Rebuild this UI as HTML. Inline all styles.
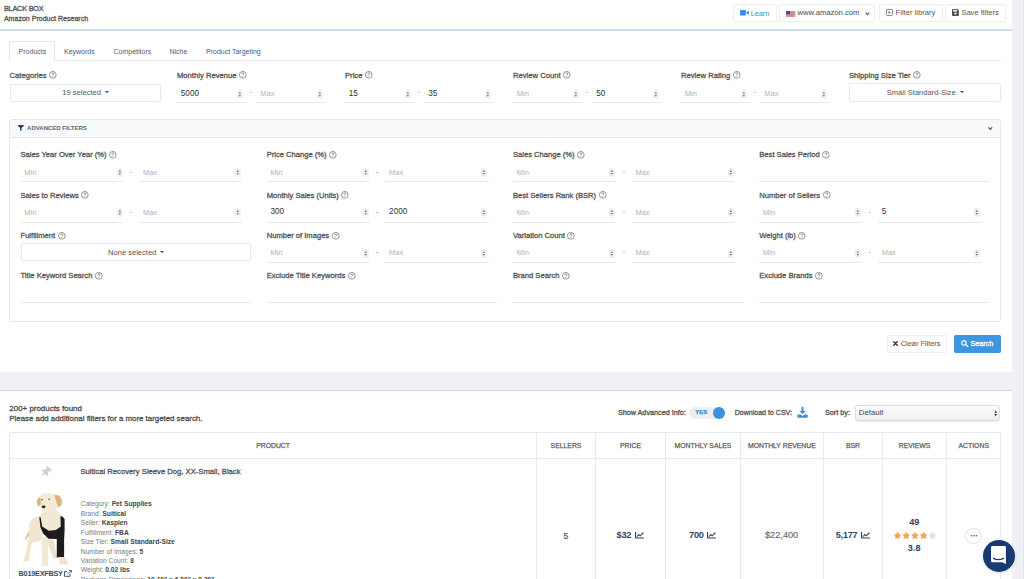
<!DOCTYPE html><html><head><meta charset="utf-8"><style>
html,body{margin:0;padding:0;}
body{width:1024px;height:579px;overflow:hidden;position:relative;background:#fff;font-family:"Liberation Sans",sans-serif;}
.t{position:absolute;white-space:nowrap;line-height:1;}
.b{position:absolute;box-sizing:border-box;}
svg.b{overflow:visible;}
#root{position:absolute;left:0;top:0;width:1024px;height:579px;overflow:hidden;}
</style></head><body><div id="root">
<div class="b" style="left:1011.80px;top:0.00px;width:12.20px;height:579.00px;background:#f0f1f5"></div>
<div class="b" style="left:1022.60px;top:0.00px;width:1.40px;height:579.00px;background:#dce8f8"></div>
<div class="t" id="hdr1" style="left:3.90px;top:4.72px;font-size:7.3px;font-weight:normal;color:#555;letter-spacing:-0.2px;-webkit-text-stroke:0.3px #555;">BLACK BOX</div>
<div class="t" id="hdr2" style="left:3.90px;top:15.43px;font-size:7.05px;font-weight:normal;color:#555;-webkit-text-stroke:0.3px #555;">Amazon Product Research</div>
<div class="b" style="left:0.00px;top:29.00px;width:1011.80px;height:1.50px;background:#d2ddec"></div>
<div class="b" style="left:732.90px;top:4.30px;width:44.20px;height:18.10px;border:1px solid #eceef1;border-radius:2px;background:#fff"></div>
<svg class="b" style="left:739.7px;top:10.3px" width="8.8" height="5.4" viewBox="0 0 9 5.5"><rect x="0" y="0" width="6" height="5.5" rx="0.7" fill="#3a8ee8"/><path d="M6.2 2.75 L9 0.5 V5Z" fill="#3a8ee8"/></svg>
<div class="t" id="learn" style="left:750.70px;top:9.62px;font-size:7.3px;font-weight:normal;color:#3a8ee8;">Learn</div>
<div class="b" style="left:779.20px;top:4.30px;width:95.40px;height:18.10px;border:1px solid #eceef1;border-radius:2px;background:#fff"></div>
<svg class="b" style="left:785.7px;top:11.0px" width="9.2" height="6.0" viewBox="0 0 19 12"><rect width="19" height="12" fill="#c0394a"/><rect y="0.92" width="19" height="0.92" fill="#f4f4f4"/><rect y="2.76" width="19" height="0.92" fill="#f4f4f4"/><rect y="4.60" width="19" height="0.92" fill="#f4f4f4"/><rect y="6.44" width="19" height="0.92" fill="#f4f4f4"/><rect y="8.28" width="19" height="0.92" fill="#f4f4f4"/><rect y="10.12" width="19" height="0.92" fill="#f4f4f4"/><rect width="8.5" height="6.5" fill="#40508a"/></svg>
<div class="t" id="amz" style="left:797.40px;top:9.32px;font-size:7.65px;font-weight:normal;color:#4a4a4a;">www.amazon.com</div>
<svg class="b" style="left:865px;top:11.6px" width="5" height="3.4" viewBox="0 0 5 3.4"><path d="M0.6 0.6 L2.5 2.6 L4.4 0.6" fill="none" stroke="#666" stroke-width="1.3"/></svg>
<div class="b" style="left:879.30px;top:4.30px;width:63.30px;height:18.10px;border:1px solid #eceef1;border-radius:2px;background:#fff"></div>
<svg class="b" style="left:885.6px;top:9.3px" width="6.9" height="6.9" viewBox="0 0 7 7"><rect x="0.45" y="0.45" width="6.1" height="6.1" rx="0.7" fill="none" stroke="#666" stroke-width="0.8"/><path d="M2.6 2 L4.9 3.5 L2.6 5Z" fill="#666"/></svg>
<div class="t" id="flib" style="left:895.60px;top:9.37px;font-size:7.6px;font-weight:normal;color:#555;">Filter library</div>
<div class="b" style="left:945.20px;top:4.30px;width:60.40px;height:18.10px;border:1px solid #eceef1;border-radius:2px;background:#fff"></div>
<svg class="b" style="left:952px;top:9.2px" width="6.9" height="6.9" viewBox="0 0 7 7"><path d="M0 0.7 Q0 0 0.7 0 H5.4 L7 1.6 V6.3 Q7 7 6.3 7 H0.7 Q0 7 0 6.3Z" fill="#555"/><rect x="1.3" y="0.9" width="3.6" height="1.7" fill="#fff"/><circle cx="3.5" cy="4.6" r="1.05" fill="#fff"/></svg>
<div class="t" id="save" style="left:961.40px;top:9.41px;font-size:7.55px;font-weight:normal;color:#555;">Save filters</div>
<div class="b" style="left:9.50px;top:59.90px;width:991.30px;height:1.00px;background:#e4e7eb"></div>
<div class="b" style="left:9.10px;top:41.10px;width:45.60px;height:19.80px;border:1px solid #e4e7eb;border-bottom:none;border-radius:2px 2px 0 0;background:#fff"></div>
<div class="t" id="tab1" style="left:18.60px;top:47.87px;font-size:7.0px;font-weight:normal;color:#5a5a5a;">Products</div>
<div class="t" id="tab2" style="left:64.00px;top:47.87px;font-size:7.0px;font-weight:normal;color:#4d5a70;">Keywords</div>
<div class="t" style="left:113.50px;top:47.87px;font-size:7.0px;font-weight:normal;color:#4d5a70;">Competitors</div>
<div class="t" style="left:169.50px;top:47.87px;font-size:7.0px;font-weight:normal;color:#4d5a70;">Niche</div>
<div class="t" style="left:206.00px;top:47.87px;font-size:7.0px;font-weight:normal;color:#4d5a70;">Product Targeting</div>
<div class="t" id="lab0" style="left:9.60px;top:71.82px;font-size:7.65px;font-weight:normal;color:#555;-webkit-text-stroke:0.3px #555;">Categories</div>
<svg class="b" style="left:48.99px;top:71.10px" width="7.6" height="7.6" viewBox="0 0 8 8"><circle cx="4" cy="4" r="3.55" fill="none" stroke="#747474" stroke-width="0.8"/><path d="M2.95 3.1 Q2.95 2 4 2 Q5.05 2 5.05 3 Q5.05 3.55 4.45 3.95 Q4 4.3 4 4.9" fill="none" stroke="#747474" stroke-width="0.8"/><circle cx="4" cy="5.95" r="0.48" fill="#747474"/></svg>
<div class="t" id="lab1" style="left:177.00px;top:71.82px;font-size:7.65px;font-weight:normal;color:#555;-webkit-text-stroke:0.3px #555;">Monthly Revenue</div>
<svg class="b" style="left:238.93px;top:71.10px" width="7.6" height="7.6" viewBox="0 0 8 8"><circle cx="4" cy="4" r="3.55" fill="none" stroke="#747474" stroke-width="0.8"/><path d="M2.95 3.1 Q2.95 2 4 2 Q5.05 2 5.05 3 Q5.05 3.55 4.45 3.95 Q4 4.3 4 4.9" fill="none" stroke="#747474" stroke-width="0.8"/><circle cx="4" cy="5.95" r="0.48" fill="#747474"/></svg>
<div class="t" id="lab2" style="left:345.00px;top:71.82px;font-size:7.65px;font-weight:normal;color:#555;-webkit-text-stroke:0.3px #555;">Price</div>
<svg class="b" style="left:364.83px;top:71.10px" width="7.6" height="7.6" viewBox="0 0 8 8"><circle cx="4" cy="4" r="3.55" fill="none" stroke="#747474" stroke-width="0.8"/><path d="M2.95 3.1 Q2.95 2 4 2 Q5.05 2 5.05 3 Q5.05 3.55 4.45 3.95 Q4 4.3 4 4.9" fill="none" stroke="#747474" stroke-width="0.8"/><circle cx="4" cy="5.95" r="0.48" fill="#747474"/></svg>
<div class="t" id="lab3" style="left:513.00px;top:71.82px;font-size:7.65px;font-weight:normal;color:#555;-webkit-text-stroke:0.3px #555;">Review Count</div>
<svg class="b" style="left:563.02px;top:71.10px" width="7.6" height="7.6" viewBox="0 0 8 8"><circle cx="4" cy="4" r="3.55" fill="none" stroke="#747474" stroke-width="0.8"/><path d="M2.95 3.1 Q2.95 2 4 2 Q5.05 2 5.05 3 Q5.05 3.55 4.45 3.95 Q4 4.3 4 4.9" fill="none" stroke="#747474" stroke-width="0.8"/><circle cx="4" cy="5.95" r="0.48" fill="#747474"/></svg>
<div class="t" id="lab4" style="left:681.00px;top:71.82px;font-size:7.65px;font-weight:normal;color:#555;-webkit-text-stroke:0.3px #555;">Review Rating</div>
<svg class="b" style="left:732.72px;top:71.10px" width="7.6" height="7.6" viewBox="0 0 8 8"><circle cx="4" cy="4" r="3.55" fill="none" stroke="#747474" stroke-width="0.8"/><path d="M2.95 3.1 Q2.95 2 4 2 Q5.05 2 5.05 3 Q5.05 3.55 4.45 3.95 Q4 4.3 4 4.9" fill="none" stroke="#747474" stroke-width="0.8"/><circle cx="4" cy="5.95" r="0.48" fill="#747474"/></svg>
<div class="t" id="lab5" style="left:849.00px;top:71.82px;font-size:7.65px;font-weight:normal;color:#555;-webkit-text-stroke:0.3px #555;">Shipping Size Tier</div>
<svg class="b" style="left:913.06px;top:71.10px" width="7.6" height="7.6" viewBox="0 0 8 8"><circle cx="4" cy="4" r="3.55" fill="none" stroke="#747474" stroke-width="0.8"/><path d="M2.95 3.1 Q2.95 2 4 2 Q5.05 2 5.05 3 Q5.05 3.55 4.45 3.95 Q4 4.3 4 4.9" fill="none" stroke="#747474" stroke-width="0.8"/><circle cx="4" cy="5.95" r="0.48" fill="#747474"/></svg>
<div class="b" style="left:9.60px;top:83.60px;width:151.20px;height:18.00px;border:1px solid #e7e9ec;border-radius:2px;background:#fff"></div>
<div class="t" style="left:62.34px;top:88.91px;font-size:7.55px;font-weight:normal;color:#555;">19 selected</div>
<svg class="b" style="left:104.86px;top:91.00px" width="4" height="2.4" viewBox="0 0 4 2.4"><path d="M0 0 H4 L2 2.2Z" fill="#555"/></svg>
<div class="b" style="left:849.00px;top:83.40px;width:151.50px;height:18.20px;border:1px solid #e7e9ec;border-radius:2px;background:#fff"></div>
<div class="t" style="left:886.79px;top:88.91px;font-size:7.55px;font-weight:normal;color:#555;">Small Standard-Size</div>
<svg class="b" style="left:959.51px;top:91.00px" width="4" height="2.4" viewBox="0 0 4 2.4"><path d="M0 0 H4 L2 2.2Z" fill="#555"/></svg>
<div class="b" style="left:177.00px;top:101.60px;width:68.80px;height:1.00px;background:#e9e9e9"></div>
<div class="t" style="left:180.80px;top:89.76px;font-size:8.2px;font-weight:normal;color:#333;">5000</div>
<svg class="b" style="left:237.40px;top:89.60px" width="5.6" height="8.8" viewBox="0 0 5.6 8.8"><rect x="0.25" y="0.25" width="5.1" height="8.3" rx="2.55" fill="#f0f0f0" stroke="#e3e3e3" stroke-width="0.5"/><path d="M1.6 3.7 L2.8 2.1 L4 3.7Z M1.6 5.1 L2.8 6.7 L4 5.1Z" fill="#707070"/></svg>
<div class="b" style="left:250.00px;top:92.40px;width:2.4px;height:0.8px;background:#d0d0d0"></div>
<div class="b" style="left:256.50px;top:101.60px;width:68.50px;height:1.00px;background:#e9e9e9"></div>
<div class="t" style="left:260.30px;top:90.35px;font-size:7.5px;font-weight:normal;color:#b0b0b0;">Max</div>
<svg class="b" style="left:316.70px;top:89.60px" width="5.6" height="8.8" viewBox="0 0 5.6 8.8"><rect x="0.25" y="0.25" width="5.1" height="8.3" rx="2.55" fill="#f0f0f0" stroke="#e3e3e3" stroke-width="0.5"/><path d="M1.6 3.7 L2.8 2.1 L4 3.7Z M1.6 5.1 L2.8 6.7 L4 5.1Z" fill="#707070"/></svg>
<div class="b" style="left:345.00px;top:101.60px;width:68.80px;height:1.00px;background:#e9e9e9"></div>
<div class="t" style="left:348.80px;top:89.76px;font-size:8.2px;font-weight:normal;color:#333;">15</div>
<svg class="b" style="left:405.40px;top:89.60px" width="5.6" height="8.8" viewBox="0 0 5.6 8.8"><rect x="0.25" y="0.25" width="5.1" height="8.3" rx="2.55" fill="#f0f0f0" stroke="#e3e3e3" stroke-width="0.5"/><path d="M1.6 3.7 L2.8 2.1 L4 3.7Z M1.6 5.1 L2.8 6.7 L4 5.1Z" fill="#707070"/></svg>
<div class="b" style="left:418.00px;top:92.40px;width:2.4px;height:0.8px;background:#d0d0d0"></div>
<div class="b" style="left:424.50px;top:101.60px;width:68.50px;height:1.00px;background:#e9e9e9"></div>
<div class="t" style="left:428.30px;top:89.76px;font-size:8.2px;font-weight:normal;color:#333;">35</div>
<svg class="b" style="left:484.70px;top:89.60px" width="5.6" height="8.8" viewBox="0 0 5.6 8.8"><rect x="0.25" y="0.25" width="5.1" height="8.3" rx="2.55" fill="#f0f0f0" stroke="#e3e3e3" stroke-width="0.5"/><path d="M1.6 3.7 L2.8 2.1 L4 3.7Z M1.6 5.1 L2.8 6.7 L4 5.1Z" fill="#707070"/></svg>
<div class="b" style="left:513.00px;top:101.60px;width:68.80px;height:1.00px;background:#e9e9e9"></div>
<div class="t" style="left:516.80px;top:90.35px;font-size:7.5px;font-weight:normal;color:#b0b0b0;">Min</div>
<svg class="b" style="left:573.40px;top:89.60px" width="5.6" height="8.8" viewBox="0 0 5.6 8.8"><rect x="0.25" y="0.25" width="5.1" height="8.3" rx="2.55" fill="#f0f0f0" stroke="#e3e3e3" stroke-width="0.5"/><path d="M1.6 3.7 L2.8 2.1 L4 3.7Z M1.6 5.1 L2.8 6.7 L4 5.1Z" fill="#707070"/></svg>
<div class="b" style="left:586.00px;top:92.40px;width:2.4px;height:0.8px;background:#d0d0d0"></div>
<div class="b" style="left:592.50px;top:101.60px;width:68.50px;height:1.00px;background:#e9e9e9"></div>
<div class="t" style="left:596.30px;top:89.76px;font-size:8.2px;font-weight:normal;color:#333;">50</div>
<svg class="b" style="left:652.70px;top:89.60px" width="5.6" height="8.8" viewBox="0 0 5.6 8.8"><rect x="0.25" y="0.25" width="5.1" height="8.3" rx="2.55" fill="#f0f0f0" stroke="#e3e3e3" stroke-width="0.5"/><path d="M1.6 3.7 L2.8 2.1 L4 3.7Z M1.6 5.1 L2.8 6.7 L4 5.1Z" fill="#707070"/></svg>
<div class="b" style="left:681.00px;top:101.60px;width:68.80px;height:1.00px;background:#e9e9e9"></div>
<div class="t" style="left:684.80px;top:90.35px;font-size:7.5px;font-weight:normal;color:#b0b0b0;">Min</div>
<svg class="b" style="left:741.40px;top:89.60px" width="5.6" height="8.8" viewBox="0 0 5.6 8.8"><rect x="0.25" y="0.25" width="5.1" height="8.3" rx="2.55" fill="#f0f0f0" stroke="#e3e3e3" stroke-width="0.5"/><path d="M1.6 3.7 L2.8 2.1 L4 3.7Z M1.6 5.1 L2.8 6.7 L4 5.1Z" fill="#707070"/></svg>
<div class="b" style="left:754.00px;top:92.40px;width:2.4px;height:0.8px;background:#d0d0d0"></div>
<div class="b" style="left:760.50px;top:101.60px;width:68.50px;height:1.00px;background:#e9e9e9"></div>
<div class="t" style="left:764.30px;top:90.35px;font-size:7.5px;font-weight:normal;color:#b0b0b0;">Max</div>
<svg class="b" style="left:820.70px;top:89.60px" width="5.6" height="8.8" viewBox="0 0 5.6 8.8"><rect x="0.25" y="0.25" width="5.1" height="8.3" rx="2.55" fill="#f0f0f0" stroke="#e3e3e3" stroke-width="0.5"/><path d="M1.6 3.7 L2.8 2.1 L4 3.7Z M1.6 5.1 L2.8 6.7 L4 5.1Z" fill="#707070"/></svg>
<div class="b" style="left:9.40px;top:119.20px;width:991.30px;height:202.40px;border:1px solid #e4e7eb;border-radius:3px;background:#fff"></div>
<div class="b" style="left:10.40px;top:120.20px;width:989.30px;height:17.80px;background:#f8f9fb;border-bottom:1px solid #e7e9ec;border-radius:2px 2px 0 0"></div>
<svg class="b" style="left:17.9px;top:125px" width="5.7" height="6" viewBox="0 0 5.7 6"><path d="M0 0 H5.7 V0.9 L3.6 2.9 V6 L2.1 5.2 V2.9 L0 0.9Z" fill="#2f3d58"/></svg>
<div class="t" id="adv" style="left:27.10px;top:125.12px;font-size:6.0px;font-weight:bold;color:#5a6479;">ADVANCED FILTERS</div>
<svg class="b" style="left:987.8px;top:126.6px" width="4.6" height="3" viewBox="0 0 4.6 3"><path d="M0.4 0.4 L2.3 2.4 L4.2 0.4" fill="none" stroke="#555" stroke-width="1.2"/></svg>
<div class="t" id="al00" style="left:20.50px;top:151.47px;font-size:7.6px;font-weight:normal;color:#555;-webkit-text-stroke:0.3px #555;">Sales Year Over Year (%)</div>
<svg class="b" style="left:109.08px;top:151.10px" width="7.6" height="7.6" viewBox="0 0 8 8"><circle cx="4" cy="4" r="3.55" fill="none" stroke="#747474" stroke-width="0.8"/><path d="M2.95 3.1 Q2.95 2 4 2 Q5.05 2 5.05 3 Q5.05 3.55 4.45 3.95 Q4 4.3 4 4.9" fill="none" stroke="#747474" stroke-width="0.8"/><circle cx="4" cy="5.95" r="0.48" fill="#747474"/></svg>
<div class="b" style="left:20.50px;top:181.30px;width:103.00px;height:1.00px;background:#e9e9e9"></div>
<div class="t" style="left:24.30px;top:168.75px;font-size:7.5px;font-weight:normal;color:#b0b0b0;">Min</div>
<svg class="b" style="left:116.50px;top:168.00px" width="5.6" height="8.8" viewBox="0 0 5.6 8.8"><rect x="0.25" y="0.25" width="5.1" height="8.3" rx="2.55" fill="#f0f0f0" stroke="#e3e3e3" stroke-width="0.5"/><path d="M1.6 3.7 L2.8 2.1 L4 3.7Z M1.6 5.1 L2.8 6.7 L4 5.1Z" fill="#707070"/></svg>
<div class="b" style="left:130.10px;top:171.80px;width:2.4px;height:0.8px;background:#d0d0d0"></div>
<div class="b" style="left:139.10px;top:181.30px;width:103.40px;height:1.00px;background:#e9e9e9"></div>
<div class="t" style="left:142.90px;top:168.75px;font-size:7.5px;font-weight:normal;color:#b0b0b0;">Max</div>
<svg class="b" style="left:235.10px;top:168.00px" width="5.6" height="8.8" viewBox="0 0 5.6 8.8"><rect x="0.25" y="0.25" width="5.1" height="8.3" rx="2.55" fill="#f0f0f0" stroke="#e3e3e3" stroke-width="0.5"/><path d="M1.6 3.7 L2.8 2.1 L4 3.7Z M1.6 5.1 L2.8 6.7 L4 5.1Z" fill="#707070"/></svg>
<div class="t" id="al01" style="left:266.70px;top:151.47px;font-size:7.6px;font-weight:normal;color:#555;-webkit-text-stroke:0.3px #555;">Price Change (%)</div>
<svg class="b" style="left:329.08px;top:151.10px" width="7.6" height="7.6" viewBox="0 0 8 8"><circle cx="4" cy="4" r="3.55" fill="none" stroke="#747474" stroke-width="0.8"/><path d="M2.95 3.1 Q2.95 2 4 2 Q5.05 2 5.05 3 Q5.05 3.55 4.45 3.95 Q4 4.3 4 4.9" fill="none" stroke="#747474" stroke-width="0.8"/><circle cx="4" cy="5.95" r="0.48" fill="#747474"/></svg>
<div class="b" style="left:266.70px;top:181.30px;width:103.00px;height:1.00px;background:#e9e9e9"></div>
<div class="t" style="left:270.50px;top:168.75px;font-size:7.5px;font-weight:normal;color:#b0b0b0;">Min</div>
<svg class="b" style="left:362.70px;top:168.00px" width="5.6" height="8.8" viewBox="0 0 5.6 8.8"><rect x="0.25" y="0.25" width="5.1" height="8.3" rx="2.55" fill="#f0f0f0" stroke="#e3e3e3" stroke-width="0.5"/><path d="M1.6 3.7 L2.8 2.1 L4 3.7Z M1.6 5.1 L2.8 6.7 L4 5.1Z" fill="#707070"/></svg>
<div class="b" style="left:376.30px;top:171.80px;width:2.4px;height:0.8px;background:#d0d0d0"></div>
<div class="b" style="left:385.30px;top:181.30px;width:103.40px;height:1.00px;background:#e9e9e9"></div>
<div class="t" style="left:389.10px;top:168.75px;font-size:7.5px;font-weight:normal;color:#b0b0b0;">Max</div>
<svg class="b" style="left:481.30px;top:168.00px" width="5.6" height="8.8" viewBox="0 0 5.6 8.8"><rect x="0.25" y="0.25" width="5.1" height="8.3" rx="2.55" fill="#f0f0f0" stroke="#e3e3e3" stroke-width="0.5"/><path d="M1.6 3.7 L2.8 2.1 L4 3.7Z M1.6 5.1 L2.8 6.7 L4 5.1Z" fill="#707070"/></svg>
<div class="t" id="al02" style="left:513.00px;top:151.47px;font-size:7.6px;font-weight:normal;color:#555;-webkit-text-stroke:0.3px #555;">Sales Change (%)</div>
<svg class="b" style="left:577.07px;top:151.10px" width="7.6" height="7.6" viewBox="0 0 8 8"><circle cx="4" cy="4" r="3.55" fill="none" stroke="#747474" stroke-width="0.8"/><path d="M2.95 3.1 Q2.95 2 4 2 Q5.05 2 5.05 3 Q5.05 3.55 4.45 3.95 Q4 4.3 4 4.9" fill="none" stroke="#747474" stroke-width="0.8"/><circle cx="4" cy="5.95" r="0.48" fill="#747474"/></svg>
<div class="b" style="left:513.00px;top:181.30px;width:103.00px;height:1.00px;background:#e9e9e9"></div>
<div class="t" style="left:516.80px;top:168.75px;font-size:7.5px;font-weight:normal;color:#b0b0b0;">Min</div>
<svg class="b" style="left:609.00px;top:168.00px" width="5.6" height="8.8" viewBox="0 0 5.6 8.8"><rect x="0.25" y="0.25" width="5.1" height="8.3" rx="2.55" fill="#f0f0f0" stroke="#e3e3e3" stroke-width="0.5"/><path d="M1.6 3.7 L2.8 2.1 L4 3.7Z M1.6 5.1 L2.8 6.7 L4 5.1Z" fill="#707070"/></svg>
<div class="b" style="left:622.60px;top:171.80px;width:2.4px;height:0.8px;background:#d0d0d0"></div>
<div class="b" style="left:631.60px;top:181.30px;width:103.40px;height:1.00px;background:#e9e9e9"></div>
<div class="t" style="left:635.40px;top:168.75px;font-size:7.5px;font-weight:normal;color:#b0b0b0;">Max</div>
<svg class="b" style="left:727.60px;top:168.00px" width="5.6" height="8.8" viewBox="0 0 5.6 8.8"><rect x="0.25" y="0.25" width="5.1" height="8.3" rx="2.55" fill="#f0f0f0" stroke="#e3e3e3" stroke-width="0.5"/><path d="M1.6 3.7 L2.8 2.1 L4 3.7Z M1.6 5.1 L2.8 6.7 L4 5.1Z" fill="#707070"/></svg>
<div class="t" id="al03" style="left:759.30px;top:151.47px;font-size:7.6px;font-weight:normal;color:#555;-webkit-text-stroke:0.3px #555;">Best Sales Period</div>
<svg class="b" style="left:822.11px;top:151.10px" width="7.6" height="7.6" viewBox="0 0 8 8"><circle cx="4" cy="4" r="3.55" fill="none" stroke="#747474" stroke-width="0.8"/><path d="M2.95 3.1 Q2.95 2 4 2 Q5.05 2 5.05 3 Q5.05 3.55 4.45 3.95 Q4 4.3 4 4.9" fill="none" stroke="#747474" stroke-width="0.8"/><circle cx="4" cy="5.95" r="0.48" fill="#747474"/></svg>
<div class="b" style="left:759.30px;top:180.90px;width:230.50px;height:1.00px;background:#e9e9e9"></div>
<div class="t" id="al10" style="left:20.50px;top:191.77px;font-size:7.6px;font-weight:normal;color:#555;-webkit-text-stroke:0.3px #555;">Sales to Reviews</div>
<svg class="b" style="left:81.19px;top:191.40px" width="7.6" height="7.6" viewBox="0 0 8 8"><circle cx="4" cy="4" r="3.55" fill="none" stroke="#747474" stroke-width="0.8"/><path d="M2.95 3.1 Q2.95 2 4 2 Q5.05 2 5.05 3 Q5.05 3.55 4.45 3.95 Q4 4.3 4 4.9" fill="none" stroke="#747474" stroke-width="0.8"/><circle cx="4" cy="5.95" r="0.48" fill="#747474"/></svg>
<div class="b" style="left:20.50px;top:221.60px;width:103.00px;height:1.00px;background:#e9e9e9"></div>
<div class="t" style="left:24.30px;top:209.05px;font-size:7.5px;font-weight:normal;color:#b0b0b0;">Min</div>
<svg class="b" style="left:116.50px;top:208.30px" width="5.6" height="8.8" viewBox="0 0 5.6 8.8"><rect x="0.25" y="0.25" width="5.1" height="8.3" rx="2.55" fill="#f0f0f0" stroke="#e3e3e3" stroke-width="0.5"/><path d="M1.6 3.7 L2.8 2.1 L4 3.7Z M1.6 5.1 L2.8 6.7 L4 5.1Z" fill="#707070"/></svg>
<div class="b" style="left:130.10px;top:212.10px;width:2.4px;height:0.8px;background:#d0d0d0"></div>
<div class="b" style="left:139.10px;top:221.60px;width:103.40px;height:1.00px;background:#e9e9e9"></div>
<div class="t" style="left:142.90px;top:209.05px;font-size:7.5px;font-weight:normal;color:#b0b0b0;">Max</div>
<svg class="b" style="left:235.10px;top:208.30px" width="5.6" height="8.8" viewBox="0 0 5.6 8.8"><rect x="0.25" y="0.25" width="5.1" height="8.3" rx="2.55" fill="#f0f0f0" stroke="#e3e3e3" stroke-width="0.5"/><path d="M1.6 3.7 L2.8 2.1 L4 3.7Z M1.6 5.1 L2.8 6.7 L4 5.1Z" fill="#707070"/></svg>
<div class="t" id="al11" style="left:266.70px;top:191.77px;font-size:7.6px;font-weight:normal;color:#555;-webkit-text-stroke:0.3px #555;">Monthly Sales (Units)</div>
<svg class="b" style="left:341.32px;top:191.40px" width="7.6" height="7.6" viewBox="0 0 8 8"><circle cx="4" cy="4" r="3.55" fill="none" stroke="#747474" stroke-width="0.8"/><path d="M2.95 3.1 Q2.95 2 4 2 Q5.05 2 5.05 3 Q5.05 3.55 4.45 3.95 Q4 4.3 4 4.9" fill="none" stroke="#747474" stroke-width="0.8"/><circle cx="4" cy="5.95" r="0.48" fill="#747474"/></svg>
<div class="b" style="left:266.70px;top:221.60px;width:103.00px;height:1.00px;background:#e9e9e9"></div>
<div class="t" style="left:270.50px;top:208.46px;font-size:8.2px;font-weight:normal;color:#333;">300</div>
<svg class="b" style="left:362.70px;top:208.30px" width="5.6" height="8.8" viewBox="0 0 5.6 8.8"><rect x="0.25" y="0.25" width="5.1" height="8.3" rx="2.55" fill="#f0f0f0" stroke="#e3e3e3" stroke-width="0.5"/><path d="M1.6 3.7 L2.8 2.1 L4 3.7Z M1.6 5.1 L2.8 6.7 L4 5.1Z" fill="#707070"/></svg>
<div class="b" style="left:376.30px;top:212.10px;width:2.4px;height:0.8px;background:#d0d0d0"></div>
<div class="b" style="left:385.30px;top:221.60px;width:103.40px;height:1.00px;background:#e9e9e9"></div>
<div class="t" style="left:389.10px;top:208.46px;font-size:8.2px;font-weight:normal;color:#333;">2000</div>
<svg class="b" style="left:481.30px;top:208.30px" width="5.6" height="8.8" viewBox="0 0 5.6 8.8"><rect x="0.25" y="0.25" width="5.1" height="8.3" rx="2.55" fill="#f0f0f0" stroke="#e3e3e3" stroke-width="0.5"/><path d="M1.6 3.7 L2.8 2.1 L4 3.7Z M1.6 5.1 L2.8 6.7 L4 5.1Z" fill="#707070"/></svg>
<div class="t" id="al12" style="left:513.00px;top:191.77px;font-size:7.6px;font-weight:normal;color:#555;-webkit-text-stroke:0.3px #555;">Best Sellers Rank (BSR)</div>
<svg class="b" style="left:598.60px;top:191.40px" width="7.6" height="7.6" viewBox="0 0 8 8"><circle cx="4" cy="4" r="3.55" fill="none" stroke="#747474" stroke-width="0.8"/><path d="M2.95 3.1 Q2.95 2 4 2 Q5.05 2 5.05 3 Q5.05 3.55 4.45 3.95 Q4 4.3 4 4.9" fill="none" stroke="#747474" stroke-width="0.8"/><circle cx="4" cy="5.95" r="0.48" fill="#747474"/></svg>
<div class="b" style="left:513.00px;top:221.60px;width:103.00px;height:1.00px;background:#e9e9e9"></div>
<div class="t" style="left:516.80px;top:209.05px;font-size:7.5px;font-weight:normal;color:#b0b0b0;">Min</div>
<svg class="b" style="left:609.00px;top:208.30px" width="5.6" height="8.8" viewBox="0 0 5.6 8.8"><rect x="0.25" y="0.25" width="5.1" height="8.3" rx="2.55" fill="#f0f0f0" stroke="#e3e3e3" stroke-width="0.5"/><path d="M1.6 3.7 L2.8 2.1 L4 3.7Z M1.6 5.1 L2.8 6.7 L4 5.1Z" fill="#707070"/></svg>
<div class="b" style="left:622.60px;top:212.10px;width:2.4px;height:0.8px;background:#d0d0d0"></div>
<div class="b" style="left:631.60px;top:221.60px;width:103.40px;height:1.00px;background:#e9e9e9"></div>
<div class="t" style="left:635.40px;top:209.05px;font-size:7.5px;font-weight:normal;color:#b0b0b0;">Max</div>
<svg class="b" style="left:727.60px;top:208.30px" width="5.6" height="8.8" viewBox="0 0 5.6 8.8"><rect x="0.25" y="0.25" width="5.1" height="8.3" rx="2.55" fill="#f0f0f0" stroke="#e3e3e3" stroke-width="0.5"/><path d="M1.6 3.7 L2.8 2.1 L4 3.7Z M1.6 5.1 L2.8 6.7 L4 5.1Z" fill="#707070"/></svg>
<div class="t" id="al13" style="left:759.30px;top:191.77px;font-size:7.6px;font-weight:normal;color:#555;-webkit-text-stroke:0.3px #555;">Number of Sellers</div>
<svg class="b" style="left:822.52px;top:191.40px" width="7.6" height="7.6" viewBox="0 0 8 8"><circle cx="4" cy="4" r="3.55" fill="none" stroke="#747474" stroke-width="0.8"/><path d="M2.95 3.1 Q2.95 2 4 2 Q5.05 2 5.05 3 Q5.05 3.55 4.45 3.95 Q4 4.3 4 4.9" fill="none" stroke="#747474" stroke-width="0.8"/><circle cx="4" cy="5.95" r="0.48" fill="#747474"/></svg>
<div class="b" style="left:759.30px;top:221.60px;width:103.00px;height:1.00px;background:#e9e9e9"></div>
<div class="t" style="left:763.10px;top:209.05px;font-size:7.5px;font-weight:normal;color:#b0b0b0;">Min</div>
<svg class="b" style="left:855.30px;top:208.30px" width="5.6" height="8.8" viewBox="0 0 5.6 8.8"><rect x="0.25" y="0.25" width="5.1" height="8.3" rx="2.55" fill="#f0f0f0" stroke="#e3e3e3" stroke-width="0.5"/><path d="M1.6 3.7 L2.8 2.1 L4 3.7Z M1.6 5.1 L2.8 6.7 L4 5.1Z" fill="#707070"/></svg>
<div class="b" style="left:868.90px;top:212.10px;width:2.4px;height:0.8px;background:#d0d0d0"></div>
<div class="b" style="left:877.90px;top:221.60px;width:103.40px;height:1.00px;background:#e9e9e9"></div>
<div class="t" style="left:881.70px;top:208.46px;font-size:8.2px;font-weight:normal;color:#333;">5</div>
<svg class="b" style="left:973.90px;top:208.30px" width="5.6" height="8.8" viewBox="0 0 5.6 8.8"><rect x="0.25" y="0.25" width="5.1" height="8.3" rx="2.55" fill="#f0f0f0" stroke="#e3e3e3" stroke-width="0.5"/><path d="M1.6 3.7 L2.8 2.1 L4 3.7Z M1.6 5.1 L2.8 6.7 L4 5.1Z" fill="#707070"/></svg>
<div class="t" id="al20" style="left:20.50px;top:232.07px;font-size:7.6px;font-weight:normal;color:#555;-webkit-text-stroke:0.3px #555;">Fulfillment</div>
<svg class="b" style="left:57.53px;top:231.70px" width="7.6" height="7.6" viewBox="0 0 8 8"><circle cx="4" cy="4" r="3.55" fill="none" stroke="#747474" stroke-width="0.8"/><path d="M2.95 3.1 Q2.95 2 4 2 Q5.05 2 5.05 3 Q5.05 3.55 4.45 3.95 Q4 4.3 4 4.9" fill="none" stroke="#747474" stroke-width="0.8"/><circle cx="4" cy="5.95" r="0.48" fill="#747474"/></svg>
<div class="b" style="left:20.50px;top:243.40px;width:230.50px;height:17.80px;border:1px solid #e7e9ec;border-radius:2px;background:#fff"></div>
<div class="t" style="left:108.07px;top:248.51px;font-size:7.55px;font-weight:normal;color:#555;">None selected</div>
<svg class="b" style="left:160.23px;top:250.60px" width="4" height="2.4" viewBox="0 0 4 2.4"><path d="M0 0 H4 L2 2.2Z" fill="#555"/></svg>
<div class="t" id="al21" style="left:266.70px;top:232.07px;font-size:7.6px;font-weight:normal;color:#555;-webkit-text-stroke:0.3px #555;">Number of Images</div>
<svg class="b" style="left:331.61px;top:231.70px" width="7.6" height="7.6" viewBox="0 0 8 8"><circle cx="4" cy="4" r="3.55" fill="none" stroke="#747474" stroke-width="0.8"/><path d="M2.95 3.1 Q2.95 2 4 2 Q5.05 2 5.05 3 Q5.05 3.55 4.45 3.95 Q4 4.3 4 4.9" fill="none" stroke="#747474" stroke-width="0.8"/><circle cx="4" cy="5.95" r="0.48" fill="#747474"/></svg>
<div class="b" style="left:266.70px;top:261.90px;width:103.00px;height:1.00px;background:#e9e9e9"></div>
<div class="t" style="left:270.50px;top:249.35px;font-size:7.5px;font-weight:normal;color:#b0b0b0;">Min</div>
<svg class="b" style="left:362.70px;top:248.60px" width="5.6" height="8.8" viewBox="0 0 5.6 8.8"><rect x="0.25" y="0.25" width="5.1" height="8.3" rx="2.55" fill="#f0f0f0" stroke="#e3e3e3" stroke-width="0.5"/><path d="M1.6 3.7 L2.8 2.1 L4 3.7Z M1.6 5.1 L2.8 6.7 L4 5.1Z" fill="#707070"/></svg>
<div class="b" style="left:376.30px;top:252.40px;width:2.4px;height:0.8px;background:#d0d0d0"></div>
<div class="b" style="left:385.30px;top:261.90px;width:103.40px;height:1.00px;background:#e9e9e9"></div>
<div class="t" style="left:389.10px;top:249.35px;font-size:7.5px;font-weight:normal;color:#b0b0b0;">Max</div>
<svg class="b" style="left:481.30px;top:248.60px" width="5.6" height="8.8" viewBox="0 0 5.6 8.8"><rect x="0.25" y="0.25" width="5.1" height="8.3" rx="2.55" fill="#f0f0f0" stroke="#e3e3e3" stroke-width="0.5"/><path d="M1.6 3.7 L2.8 2.1 L4 3.7Z M1.6 5.1 L2.8 6.7 L4 5.1Z" fill="#707070"/></svg>
<div class="t" id="al22" style="left:513.00px;top:232.07px;font-size:7.6px;font-weight:normal;color:#555;-webkit-text-stroke:0.3px #555;">Variation Count</div>
<svg class="b" style="left:567.22px;top:231.70px" width="7.6" height="7.6" viewBox="0 0 8 8"><circle cx="4" cy="4" r="3.55" fill="none" stroke="#747474" stroke-width="0.8"/><path d="M2.95 3.1 Q2.95 2 4 2 Q5.05 2 5.05 3 Q5.05 3.55 4.45 3.95 Q4 4.3 4 4.9" fill="none" stroke="#747474" stroke-width="0.8"/><circle cx="4" cy="5.95" r="0.48" fill="#747474"/></svg>
<div class="b" style="left:513.00px;top:261.90px;width:103.00px;height:1.00px;background:#e9e9e9"></div>
<div class="t" style="left:516.80px;top:249.35px;font-size:7.5px;font-weight:normal;color:#b0b0b0;">Min</div>
<svg class="b" style="left:609.00px;top:248.60px" width="5.6" height="8.8" viewBox="0 0 5.6 8.8"><rect x="0.25" y="0.25" width="5.1" height="8.3" rx="2.55" fill="#f0f0f0" stroke="#e3e3e3" stroke-width="0.5"/><path d="M1.6 3.7 L2.8 2.1 L4 3.7Z M1.6 5.1 L2.8 6.7 L4 5.1Z" fill="#707070"/></svg>
<div class="b" style="left:622.60px;top:252.40px;width:2.4px;height:0.8px;background:#d0d0d0"></div>
<div class="b" style="left:631.60px;top:261.90px;width:103.40px;height:1.00px;background:#e9e9e9"></div>
<div class="t" style="left:635.40px;top:249.35px;font-size:7.5px;font-weight:normal;color:#b0b0b0;">Max</div>
<svg class="b" style="left:727.60px;top:248.60px" width="5.6" height="8.8" viewBox="0 0 5.6 8.8"><rect x="0.25" y="0.25" width="5.1" height="8.3" rx="2.55" fill="#f0f0f0" stroke="#e3e3e3" stroke-width="0.5"/><path d="M1.6 3.7 L2.8 2.1 L4 3.7Z M1.6 5.1 L2.8 6.7 L4 5.1Z" fill="#707070"/></svg>
<div class="t" id="al23" style="left:759.30px;top:232.07px;font-size:7.6px;font-weight:normal;color:#555;-webkit-text-stroke:0.3px #555;">Weight (lb)</div>
<svg class="b" style="left:798.30px;top:231.70px" width="7.6" height="7.6" viewBox="0 0 8 8"><circle cx="4" cy="4" r="3.55" fill="none" stroke="#747474" stroke-width="0.8"/><path d="M2.95 3.1 Q2.95 2 4 2 Q5.05 2 5.05 3 Q5.05 3.55 4.45 3.95 Q4 4.3 4 4.9" fill="none" stroke="#747474" stroke-width="0.8"/><circle cx="4" cy="5.95" r="0.48" fill="#747474"/></svg>
<div class="b" style="left:759.30px;top:261.90px;width:103.00px;height:1.00px;background:#e9e9e9"></div>
<div class="t" style="left:763.10px;top:249.35px;font-size:7.5px;font-weight:normal;color:#b0b0b0;">Min</div>
<svg class="b" style="left:855.30px;top:248.60px" width="5.6" height="8.8" viewBox="0 0 5.6 8.8"><rect x="0.25" y="0.25" width="5.1" height="8.3" rx="2.55" fill="#f0f0f0" stroke="#e3e3e3" stroke-width="0.5"/><path d="M1.6 3.7 L2.8 2.1 L4 3.7Z M1.6 5.1 L2.8 6.7 L4 5.1Z" fill="#707070"/></svg>
<div class="b" style="left:868.90px;top:252.40px;width:2.4px;height:0.8px;background:#d0d0d0"></div>
<div class="b" style="left:877.90px;top:261.90px;width:103.40px;height:1.00px;background:#e9e9e9"></div>
<div class="t" style="left:881.70px;top:249.35px;font-size:7.5px;font-weight:normal;color:#b0b0b0;">Max</div>
<svg class="b" style="left:973.90px;top:248.60px" width="5.6" height="8.8" viewBox="0 0 5.6 8.8"><rect x="0.25" y="0.25" width="5.1" height="8.3" rx="2.55" fill="#f0f0f0" stroke="#e3e3e3" stroke-width="0.5"/><path d="M1.6 3.7 L2.8 2.1 L4 3.7Z M1.6 5.1 L2.8 6.7 L4 5.1Z" fill="#707070"/></svg>
<div class="t" id="al30" style="left:20.50px;top:272.37px;font-size:7.6px;font-weight:normal;color:#555;-webkit-text-stroke:0.3px #555;">Title Keyword Search</div>
<svg class="b" style="left:94.84px;top:272.00px" width="7.6" height="7.6" viewBox="0 0 8 8"><circle cx="4" cy="4" r="3.55" fill="none" stroke="#747474" stroke-width="0.8"/><path d="M2.95 3.1 Q2.95 2 4 2 Q5.05 2 5.05 3 Q5.05 3.55 4.45 3.95 Q4 4.3 4 4.9" fill="none" stroke="#747474" stroke-width="0.8"/><circle cx="4" cy="5.95" r="0.48" fill="#747474"/></svg>
<div class="b" style="left:20.50px;top:301.80px;width:230.50px;height:1.00px;background:#e9e9e9"></div>
<div class="t" id="al31" style="left:266.70px;top:272.37px;font-size:7.6px;font-weight:normal;color:#555;-webkit-text-stroke:0.3px #555;">Exclude Title Keywords</div>
<svg class="b" style="left:347.66px;top:272.00px" width="7.6" height="7.6" viewBox="0 0 8 8"><circle cx="4" cy="4" r="3.55" fill="none" stroke="#747474" stroke-width="0.8"/><path d="M2.95 3.1 Q2.95 2 4 2 Q5.05 2 5.05 3 Q5.05 3.55 4.45 3.95 Q4 4.3 4 4.9" fill="none" stroke="#747474" stroke-width="0.8"/><circle cx="4" cy="5.95" r="0.48" fill="#747474"/></svg>
<div class="b" style="left:266.70px;top:301.80px;width:230.50px;height:1.00px;background:#e9e9e9"></div>
<div class="t" id="al32" style="left:513.00px;top:272.37px;font-size:7.6px;font-weight:normal;color:#555;-webkit-text-stroke:0.3px #555;">Brand Search</div>
<svg class="b" style="left:561.87px;top:272.00px" width="7.6" height="7.6" viewBox="0 0 8 8"><circle cx="4" cy="4" r="3.55" fill="none" stroke="#747474" stroke-width="0.8"/><path d="M2.95 3.1 Q2.95 2 4 2 Q5.05 2 5.05 3 Q5.05 3.55 4.45 3.95 Q4 4.3 4 4.9" fill="none" stroke="#747474" stroke-width="0.8"/><circle cx="4" cy="5.95" r="0.48" fill="#747474"/></svg>
<div class="b" style="left:513.00px;top:301.80px;width:230.50px;height:1.00px;background:#e9e9e9"></div>
<div class="t" id="al33" style="left:759.30px;top:272.37px;font-size:7.6px;font-weight:normal;color:#555;-webkit-text-stroke:0.3px #555;">Exclude Brands</div>
<svg class="b" style="left:814.93px;top:272.00px" width="7.6" height="7.6" viewBox="0 0 8 8"><circle cx="4" cy="4" r="3.55" fill="none" stroke="#747474" stroke-width="0.8"/><path d="M2.95 3.1 Q2.95 2 4 2 Q5.05 2 5.05 3 Q5.05 3.55 4.45 3.95 Q4 4.3 4 4.9" fill="none" stroke="#747474" stroke-width="0.8"/><circle cx="4" cy="5.95" r="0.48" fill="#747474"/></svg>
<div class="b" style="left:759.30px;top:301.80px;width:230.50px;height:1.00px;background:#e9e9e9"></div>
<div class="b" style="left:886.70px;top:335.10px;width:60.70px;height:17.90px;border:1px solid #eceef1;border-radius:2px;background:#fff"></div>
<svg class="b" style="left:893.4px;top:341.3px" width="5" height="5" viewBox="0 0 5 5"><path d="M0.7 0.7 L4.3 4.3 M4.3 0.7 L0.7 4.3" stroke="#3a3a3a" stroke-width="1.45" stroke-linecap="round"/></svg>
<div class="t" id="clr" style="left:900.80px;top:340.28px;font-size:7.35px;font-weight:normal;color:#666;-webkit-text-stroke:0.1px #666;">Clear Filters</div>
<div class="b" style="left:954.10px;top:335.10px;width:46.80px;height:17.90px;background:#3d96de;border-radius:2px"></div>
<svg class="b" style="left:960.6px;top:340.4px" width="7.6" height="6.8" viewBox="0 0 7.6 6.8"><circle cx="2.9" cy="2.9" r="2.2" fill="none" stroke="#fff" stroke-width="1.2"/><path d="M4.6 4.5 L6.8 6.4" stroke="#fff" stroke-width="1.3" stroke-linecap="round"/></svg>
<div class="t" id="srch" style="left:970.40px;top:340.01px;font-size:7.2px;font-weight:normal;color:#fff;-webkit-text-stroke:0.3px #fff;">Search</div>
<div class="b" style="left:0.00px;top:372.20px;width:1011.80px;height:18.30px;background:#f0f1f5"></div>
<div class="b" style="left:0.00px;top:389.90px;width:1011.80px;height:1.20px;background:#cfd9ea"></div>
<div class="t" id="found" style="left:9.30px;top:405.37px;font-size:7.95px;font-weight:normal;color:#4f4f4f;-webkit-text-stroke:0.3px #4f4f4f;">200+ products found</div>
<div class="t" id="please" style="left:9.30px;top:414.65px;font-size:7.86px;font-weight:normal;color:#4f4f4f;-webkit-text-stroke:0.3px #4f4f4f;">Please add additional filters for a more targeted search.</div>
<div class="t" id="sai" style="left:617.90px;top:409.19px;font-size:7.22px;font-weight:normal;color:#555;-webkit-text-stroke:0.3px #555;">Show Advanced Info:</div>
<div class="b" style="left:688.60px;top:406.90px;width:36.70px;height:12.30px;background:#efeff1;border-radius:6.2px"></div>
<div class="t" id="yes" style="left:695.30px;top:409.61px;font-size:5.9px;font-weight:bold;color:#3a8ad6;letter-spacing:0.1px;-webkit-text-stroke:0.25px #3a8ad6;">YES</div>
<div class="b" style="left:713.00px;top:406.90px;width:12.30px;height:12.30px;background:#3b92dd;border-radius:50%"></div>
<div class="t" id="dl" style="left:734.70px;top:409.33px;font-size:7.05px;font-weight:normal;color:#555;-webkit-text-stroke:0.3px #555;">Download to CSV:</div>
<svg class="b" style="left:796.6px;top:406.9px" width="11.1" height="10.7" viewBox="0 0 11 10.7"><path d="M4.5 0 H6.5 V4.0 H8.6 L5.5 7.2 L2.4 4.0 H4.5Z" fill="#3b8fe0"/><path d="M0.4 7.4 H3.7 L5.5 9.1 L7.3 7.4 H10.6 V10.7 H0.4Z" fill="#3b8fe0"/></svg>
<div class="t" id="sortby" style="left:824.90px;top:409.02px;font-size:7.3px;font-weight:normal;color:#555;-webkit-text-stroke:0.3px #555;">Sort by:</div>
<div class="b" style="left:854.60px;top:404.80px;width:145.50px;height:15.80px;border:1px solid #dcdcdc;border-radius:3px;background:linear-gradient(#fdfdfd,#f0f0f0);box-shadow:0 0.5px 1px rgba(0,0,0,0.08)"></div>
<div class="t" id="def" style="left:858.80px;top:408.60px;font-size:7.8px;font-weight:normal;color:#444;">Default</div>
<svg class="b" style="left:993.7px;top:409.5px" width="3.4" height="6.7" viewBox="0 0 3.4 6.7"><path d="M0.2 2.8 L1.7 0.4 L3.2 2.8Z M0.2 3.9 L1.7 6.3 L3.2 3.9Z" fill="#333"/></svg>
<div class="b" style="left:9.20px;top:432.40px;width:991.80px;height:200.00px;border:1px solid #e8ebef;background:transparent"></div>
<div class="b" style="left:9.20px;top:458.10px;width:991.30px;height:1.00px;background:#e8ebef"></div>
<div class="b" style="left:536.00px;top:432.40px;width:1.00px;height:200.00px;background:#e8ebef"></div>
<div class="b" style="left:595.00px;top:432.40px;width:1.00px;height:200.00px;background:#e8ebef"></div>
<div class="b" style="left:665.00px;top:432.40px;width:1.00px;height:200.00px;background:#e8ebef"></div>
<div class="b" style="left:740.00px;top:432.40px;width:1.00px;height:200.00px;background:#e8ebef"></div>
<div class="b" style="left:822.80px;top:432.40px;width:1.00px;height:200.00px;background:#e8ebef"></div>
<div class="b" style="left:882.20px;top:432.40px;width:1.00px;height:200.00px;background:#e8ebef"></div>
<div class="b" style="left:946.00px;top:432.40px;width:1.00px;height:200.00px;background:#e8ebef"></div>
<div class="t" style="left:10.20px;width:525.80px;text-align:center;top:442.50px;font-size:6.85px;font-weight:normal;color:#606060;-webkit-text-stroke:0.25px #606060;">PRODUCT</div>
<div class="t" style="left:537.00px;width:58.00px;text-align:center;top:442.50px;font-size:6.85px;font-weight:normal;color:#606060;-webkit-text-stroke:0.25px #606060;">SELLERS</div>
<div class="t" style="left:596.00px;width:69.00px;text-align:center;top:442.50px;font-size:6.85px;font-weight:normal;color:#606060;-webkit-text-stroke:0.25px #606060;">PRICE</div>
<div class="t" style="left:666.00px;width:74.00px;text-align:center;top:442.50px;font-size:6.85px;font-weight:normal;color:#606060;-webkit-text-stroke:0.25px #606060;">MONTHLY SALES</div>
<div class="t" style="left:741.00px;width:81.80px;text-align:center;top:442.50px;font-size:6.85px;font-weight:normal;color:#606060;-webkit-text-stroke:0.25px #606060;">MONTHLY REVENUE</div>
<div class="t" style="left:823.80px;width:58.40px;text-align:center;top:442.50px;font-size:6.85px;font-weight:normal;color:#606060;-webkit-text-stroke:0.25px #606060;">BSR</div>
<div class="t" style="left:883.20px;width:62.80px;text-align:center;top:442.50px;font-size:6.85px;font-weight:normal;color:#606060;-webkit-text-stroke:0.25px #606060;">REVIEWS</div>
<div class="t" style="left:947.00px;width:53.50px;text-align:center;top:442.50px;font-size:6.85px;font-weight:normal;color:#606060;-webkit-text-stroke:0.25px #606060;">ACTIONS</div>
<svg class="b" style="left:39.0px;top:465.3px" width="13.6" height="13.6" viewBox="-320 -320 640 640"><g transform="rotate(45) translate(-192 -256)"><path d="M298 214L286 96H328c13 0 24-11 24-24V24c0-13-11-24-24-24H56C43 0 32 11 32 24v48c0 13 11 24 24 24h42L86 214C37 237 0 277 0 328c0 13 11 24 24 24h136v104c0 1 0 2 1 4l24 48c3 6 11 6 14 0l24-48c1-1 1-2 1-4V352h136c13 0 24-11 24-24 0-51-38-91-86-114z" fill="#d3d3d3"/></g></svg>
<div class="t" id="title" style="left:80.50px;top:468.12px;font-size:7.66px;font-weight:normal;color:#555;-webkit-text-stroke:0.3px #555;">Suitical Recovery Sleeve Dog, XX-Small, Black</div>
<div class="t" style="left:80.8px;top:501.33px;font-size:6.7px;color:#7a7a7a">Category: <b style="color:#454545">Pet Supplies</b></div>
<div class="t" style="left:80.8px;top:510.77px;font-size:6.7px;color:#7a7a7a">Brand: <b style="color:#454545">Suitical</b></div>
<div class="t" style="left:80.8px;top:520.21px;font-size:6.7px;color:#7a7a7a">Seller: <b style="color:#454545">Kaspien</b></div>
<div class="t" style="left:80.8px;top:529.65px;font-size:6.7px;color:#7a7a7a">Fulfillment: <b style="color:#454545">FBA</b></div>
<div class="t" style="left:80.8px;top:539.09px;font-size:6.7px;color:#7a7a7a">Size Tier: <b style="color:#454545">Small Standard-Size</b></div>
<div class="t" style="left:80.8px;top:548.53px;font-size:6.7px;color:#7a7a7a">Number of Images: <b style="color:#454545">5</b></div>
<div class="t" style="left:80.8px;top:557.97px;font-size:6.7px;color:#7a7a7a">Variation Count: <b style="color:#454545">8</b></div>
<div class="t" style="left:80.8px;top:567.41px;font-size:6.7px;color:#7a7a7a">Weight: <b style="color:#454545">0.02 lbs</b></div>
<div class="t" style="left:80.8px;top:576.85px;font-size:6.7px;color:#7a7a7a">Package Dimensions: <b style="color:#454545">10.10" x 6.00" x 0.30"</b></div>
<svg class="b" style="left:15px;top:485px" width="65" height="87" viewBox="15 485 65 87">
<path d="M40.5 516.5 L34 517.5 L30 522 L28.5 530 L29 538 L32 542.5 L38 542 L42 539 Z" fill="#f0e6d0"/><path d="M29 536 L33 540 L30 550 L28.8 561.2 L22.8 561.2 L25.5 556 L27.5 545 Z" fill="#efe4cc"/>
<path d="M29 531 L25 538 L25.8 540.5 L29.6 535 Z" fill="#e2c99a"/>
<path d="M46 538 L51 552 L53.5 558.5 L58.6 558 L56.5 553 L53.5 540 Z" fill="#ece2cb"/>
<path d="M41.5 536 L42 561.5 L41.2 565.8 L48.6 565.8 L48 561 L48.6 538 Z" fill="#f2e9d5"/>
<path d="M39.5 517 L42.5 510 L55.5 509 L62.2 516 L64.5 528 L63.5 538 L48 539 L42 533 Z" fill="#f2e9d5"/>
<path d="M38.2 498 L42 493.5 L50 492.8 L56.5 494.5 L60 499 L58.5 507 L54 511.5 L46 512.5 L41.5 509.5 L39.8 504.5 Z" fill="#f4ead6"/>
<path d="M38.6 497.5 L36.8 500.5 L37.6 506.5 L40.8 504.5 L40.6 499 Z" fill="#d9b47c"/>
<path d="M54.4 495 L59.5 495.5 L62 500 L61.5 505 L58.8 507.5 L56.5 503 Z" fill="#d9b47c"/>
<ellipse cx="42" cy="499.7" rx="0.8" ry="0.6" fill="#3a3a3a"/><ellipse cx="49.2" cy="499.2" rx="0.85" ry="0.65" fill="#3a3a3a"/>
<ellipse cx="43.6" cy="506.8" rx="1.9" ry="1.4" fill="#222"/>
<path d="M39.2 517.3 L40.6 517.3 L42.2 526.5 L48.8 530.8 L56 530 L60.8 526.5 L60.4 516.5 L62.2 516.2 L64.6 519 L64.6 530 L64.1 540 L64.1 557.2 L56.8 557.2 L56.8 539 L48.5 538.8 L43.2 533.5 L40.5 527.5 Z" fill="#1c1c1c"/>
<path d="M59 557 L64.2 557 L68.4 562.5 L67.5 564.6 L60 564.6 Z" fill="#efe5cf"/>
</svg>
<div class="t" id="asin" style="left:18.60px;top:570.42px;font-size:7.3px;font-weight:bold;color:#3b4b6b;letter-spacing:-0.25px">B019EXFBSY</div>
<svg class="b" style="left:63.8px;top:569.7px" width="7.8" height="6.8" viewBox="0 0 8 7"><path d="M5.2 0.5 H7.5 V2.8 M7.4 0.6 L3.6 4.4 M6.2 4.1 V6.5 H0.5 V1.6 H3" fill="none" stroke="#3b4b6b" stroke-width="0.95"/></svg>
<div class="t" id="sell" style="left:563.60px;top:531.89px;font-size:8.4px;font-weight:normal;color:#5a5a5a;-webkit-text-stroke:0.25px #5a5a5a;">5</div>
<div class="t" id="price" style="left:616.50px;top:530.81px;font-size:9.2px;font-weight:bold;color:#34425e;letter-spacing:-0.2px">$32</div>
<svg class="b" style="left:635.00px;top:532.00px" width="9" height="6.6" viewBox="0 0 9 6.6"><path d="M0.55 0 V6 H9" fill="none" stroke="#34425e" stroke-width="1.1"/><path d="M2 4.6 L3.9 2.6 L5.3 3.8 L7.7 1.4" fill="none" stroke="#34425e" stroke-width="1.05"/><circle cx="7.7" cy="1.3" r="0.9" fill="#34425e"/></svg>
<div class="t" id="ms" style="left:689.00px;top:530.81px;font-size:9.2px;font-weight:bold;color:#34425e;letter-spacing:-0.2px">700</div>
<svg class="b" style="left:707.20px;top:532.00px" width="9" height="6.6" viewBox="0 0 9 6.6"><path d="M0.55 0 V6 H9" fill="none" stroke="#34425e" stroke-width="1.1"/><path d="M2 4.6 L3.9 2.6 L5.3 3.8 L7.7 1.4" fill="none" stroke="#34425e" stroke-width="1.05"/><circle cx="7.7" cy="1.3" r="0.9" fill="#34425e"/></svg>
<div class="t" id="rev" style="left:765.00px;top:531.01px;font-size:9.2px;font-weight:normal;color:#6a6a6a;-webkit-text-stroke:0.15px #6a6a6a;">$22,400</div>
<div class="t" id="bsr" style="left:835.70px;top:530.98px;font-size:9.0px;font-weight:bold;color:#34425e;letter-spacing:-0.15px">5,177</div>
<svg class="b" style="left:861.00px;top:532.00px" width="9" height="6.6" viewBox="0 0 9 6.6"><path d="M0.55 0 V6 H9" fill="none" stroke="#34425e" stroke-width="1.1"/><path d="M2 4.6 L3.9 2.6 L5.3 3.8 L7.7 1.4" fill="none" stroke="#34425e" stroke-width="1.05"/><circle cx="7.7" cy="1.3" r="0.9" fill="#34425e"/></svg>
<div class="t" id="r49" style="left:909.20px;top:517.71px;font-size:9.2px;font-weight:bold;color:#34425e;">49</div>
<svg class="b" style="left:893.7px;top:531.9px" width="42" height="7.5" viewBox="0 0 42 7.5"><path transform="translate(0.00,0)" d="M3.50 0.15 L4.65 2.17 L6.92 2.64 L5.35 4.35 L5.62 6.66 L3.50 5.70 L1.38 6.66 L1.65 4.35 L0.08 2.64 L2.35 2.17Z" fill="#f2a550" stroke="#f2a550" stroke-width="0.5" stroke-linejoin="round"/><path transform="translate(8.70,0)" d="M3.50 0.15 L4.65 2.17 L6.92 2.64 L5.35 4.35 L5.62 6.66 L3.50 5.70 L1.38 6.66 L1.65 4.35 L0.08 2.64 L2.35 2.17Z" fill="#f2a550" stroke="#f2a550" stroke-width="0.5" stroke-linejoin="round"/><path transform="translate(17.40,0)" d="M3.50 0.15 L4.65 2.17 L6.92 2.64 L5.35 4.35 L5.62 6.66 L3.50 5.70 L1.38 6.66 L1.65 4.35 L0.08 2.64 L2.35 2.17Z" fill="#f2a550" stroke="#f2a550" stroke-width="0.5" stroke-linejoin="round"/><path transform="translate(26.10,0)" d="M3.50 0.15 L4.65 2.17 L6.92 2.64 L5.35 4.35 L5.62 6.66 L3.50 5.70 L1.38 6.66 L1.65 4.35 L0.08 2.64 L2.35 2.17Z" fill="#f2a550" stroke="#f2a550" stroke-width="0.5" stroke-linejoin="round"/><path transform="translate(34.80,0)" d="M3.50 0.15 L4.65 2.17 L6.92 2.64 L5.35 4.35 L5.62 6.66 L3.50 5.70 L1.38 6.66 L1.65 4.35 L0.08 2.64 L2.35 2.17Z" fill="#e0e0e0" stroke="#e0e0e0" stroke-width="0.5" stroke-linejoin="round"/></svg>
<div class="t" id="r38" style="left:907.80px;top:544.20px;font-size:9.1px;font-weight:bold;color:#34425e;">3.8</div>
<div class="b" style="left:965.30px;top:527.70px;width:16.60px;height:16.00px;border:1px solid #e6e6e6;border-radius:50%;background:#fff"></div>
<svg class="b" style="left:970.6px;top:534.9px" width="6.2" height="1.6" viewBox="0 0 6.2 1.6"><circle cx="0.8" cy="0.8" r="0.75" fill="#444"/><circle cx="3.1" cy="0.8" r="0.75" fill="#444"/><circle cx="5.4" cy="0.8" r="0.75" fill="#444"/></svg>
<div class="b" style="left:982.60px;top:539.90px;width:32.20px;height:32.00px;background:#173b74;border-radius:50%;box-shadow:0 1px 4px rgba(0,0,0,0.12)"></div>
<svg class="b" style="left:991.1px;top:546.4px" width="14.9" height="17.9" viewBox="0 0 14.9 17.9"><path d="M1.2 0 H13.7 Q14.9 0 14.9 1.2 V17.9 L11.4 16.2 H1.2 Q0 16.2 0 15 V1.2 Q0 0 1.2 0Z" fill="#fff"/><path d="M2.4 12.4 Q7.45 14.9 12.5 12.4" fill="none" stroke="#173b74" stroke-width="1.25" stroke-linecap="round"/></svg>
</div></body></html>
